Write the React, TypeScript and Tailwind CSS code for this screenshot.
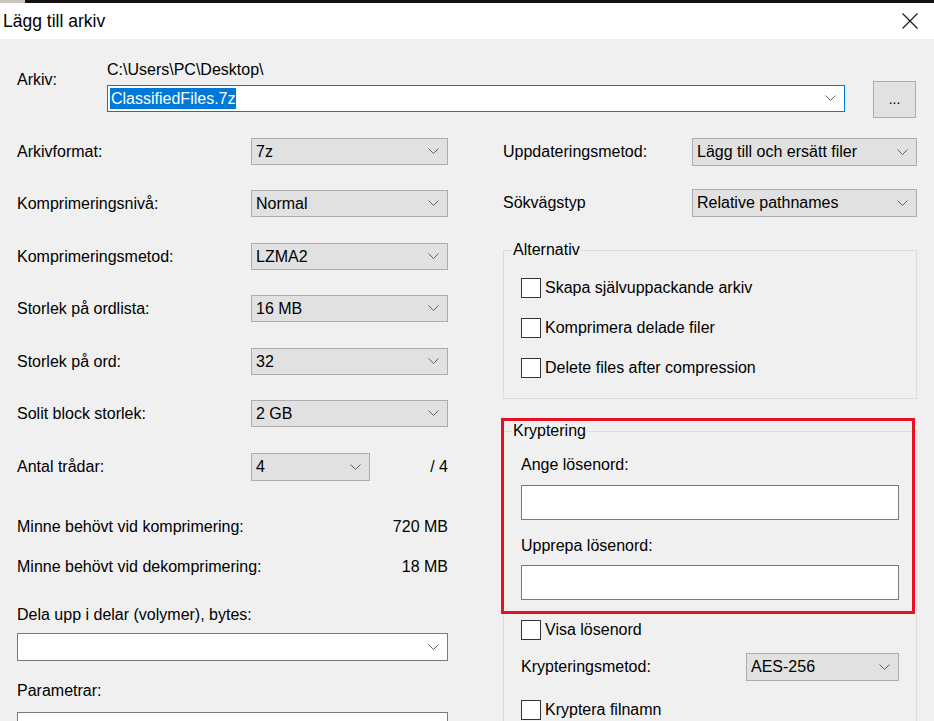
import React from "react";

const FONT = { fontFamily: '"Liberation Sans", Arial, sans-serif' };

function Chevron() {
  return (
    <svg width="11" height="7" viewBox="0 0 11 7" className="shrink-0">
      <polyline points="0.5,0.5 5.5,5.5 10.5,0.5" fill="none" stroke="#606060" strokeWidth="1" />
    </svg>
  );
}

function Select({ value, className = "" }: { value: string; className?: string }) {
  return (
    <div
      className={`flex items-center justify-between bg-[#e1e1e1] border border-[#adadad] pl-[4px] pr-[8px] text-[16px] leading-[18px] text-black ${className}`}
    >
      <span>{value}</span>
      <Chevron />
    </div>
  );
}

function Checkbox({ label, className = "" }: { label: string; className?: string }) {
  return (
    <div className={`flex items-center gap-[4px] h-[20px] ${className}`}>
      <div className="w-[20px] h-[20px] bg-white border border-[#333333]" />
      <span className="text-[16px] leading-[18px]">{label}</span>
    </div>
  );
}

function Row({ label, value, className }: { label: string; value: string; className: string }) {
  return (
    <div className={`flex items-center h-[27px] ${className}`}>
      <span className="w-[234px] text-[16px] leading-[18px]">{label}</span>
      <Select value={value} className="w-[197px] h-[27px]" />
    </div>
  );
}

export default function App() {
  return (
    <div className="w-[934px] h-[721px] overflow-hidden bg-[#f0f0f0] text-black" style={FONT}>
      {/* window top edge */}
      <div className="flex h-[3px]">
        <div className="w-[25px] bg-[#c9c5bd]" />
        <div className="flex-1 bg-[#111111]" />
      </div>

      {/* title bar */}
      <div className="flex items-center justify-between h-[36px] bg-white pl-[3px] pr-[16px]">
        <span className="text-[17.5px] leading-[20px]">Lägg till arkiv</span>
        <svg width="16" height="16" viewBox="0 0 16 16">
          <path d="M0.5 0.5 L15.5 15.5 M15.5 0.5 L0.5 15.5" stroke="#111" strokeWidth="1.1" fill="none" />
        </svg>
      </div>

      {/* archive path */}
      <div className="flex items-start pl-[17px] pt-[22px]">
        <span className="w-[90px] mt-[10px] text-[16px] leading-[18px]">Arkiv:</span>
        <div className="w-[738px] flex flex-col">
          <span className="text-[16px] leading-[18px] h-[18px]">C:\Users\PC\Desktop\</span>
          <div className="mt-[6px] h-[27px] flex items-center justify-between bg-white border border-[#0078d7] pl-[2px] pr-[8px]">
            <span className="bg-[#0078d7] text-white text-[16px] leading-[21px] px-[1px]">ClassifiedFiles.7z</span>
            <Chevron />
          </div>
        </div>
        <button className="ml-[28px] mt-[20px] w-[43px] h-[37px] bg-[#e1e1e1] border border-[#adadad] text-[14px] leading-[14px] pb-[2px]">
          ...
        </button>
      </div>

      <div className="flex mt-[20px]">
        {/* left column */}
        <div className="ml-[17px] w-[431px] flex flex-col">
          <Row label="Arkivformat:" value="7z" className="" />
          <Row label="Komprimeringsnivå:" value="Normal" className="mt-[25px]" />
          <Row label="Komprimeringsmetod:" value="LZMA2" className="mt-[26px]" />
          <Row label="Storlek på ordlista:" value="16 MB" className="mt-[25px]" />
          <Row label="Storlek på ord:" value="32" className="mt-[26px]" />
          <Row label="Solit block storlek:" value="2 GB" className="mt-[25px]" />
          <div className="flex items-center h-[28px] mt-[26px]">
            <span className="w-[234px] text-[16px] leading-[18px]">Antal trådar:</span>
            <Select value="4" className="w-[119px] h-[28px]" />
            <span className="flex-1 text-right text-[16px] leading-[18px]">/ 4</span>
          </div>
          <div className="flex justify-between mt-[37px] text-[16px] leading-[18px]">
            <span>Minne behövt vid komprimering:</span>
            <span>720 MB</span>
          </div>
          <div className="flex justify-between mt-[22px] text-[16px] leading-[18px]">
            <span>Minne behövt vid dekomprimering:</span>
            <span>18 MB</span>
          </div>
          <span className="mt-[30px] text-[16px] leading-[18px]">Dela upp i delar (volymer), bytes:</span>
          <div className="mt-[9px] h-[28px] flex items-center justify-end bg-white border border-[#7a7a7a] pr-[8px]">
            <Chevron />
          </div>
          <span className="mt-[21px] text-[16px] leading-[18px]">Parametrar:</span>
          <div className="mt-[12px] h-[30px] bg-white border border-[#7a7a7a]" />
        </div>

        {/* right column */}
        <div className="ml-[55px] w-[414px] flex flex-col">
          <div className="flex items-center h-[28px]">
            <span className="w-[189px] text-[16px] leading-[18px]">Uppdateringsmetod:</span>
            <Select value="Lägg till och ersätt filer" className="w-[225px] h-[28px]" />
          </div>
          <div className="flex items-center h-[28px] mt-[23px]">
            <span className="w-[189px] text-[16px] leading-[18px]">Sökvägstyp</span>
            <Select value="Relative pathnames" className="w-[225px] h-[28px]" />
          </div>

          <div className="relative mt-[33px] h-[149px] border border-[#dcdcdc] pl-[17px] pt-[27px] flex flex-col gap-[20px]">
            <span className="absolute -top-[10px] left-[8px] px-[1px] bg-[#f0f0f0] text-[16px] leading-[18px]">Alternativ</span>
            <Checkbox label="Skapa självuppackande arkiv" />
            <Checkbox label="Komprimera delade filer" />
            <Checkbox label="Delete files after compression" />
          </div>

          <div className="relative mt-[32px] h-[320px] border border-[#dcdcdc] px-[17px] pt-[24px] flex flex-col">
            <span className="absolute -top-[10px] left-[8px] px-[1px] bg-[#f0f0f0] text-[16px] leading-[18px]">Kryptering</span>
            <span className="text-[16px] leading-[18px]">Ange lösenord:</span>
            <div className="mt-[11px] h-[35px] bg-white border border-[#7a7a7a]" />
            <span className="mt-[17px] text-[16px] leading-[18px]">Upprepa lösenord:</span>
            <div className="mt-[10px] h-[35px] bg-white border border-[#7a7a7a]" />
            <Checkbox label="Visa lösenord" className="mt-[20px]" />
            <div className="flex items-center justify-between h-[28px] mt-[13px]">
              <span className="text-[16px] leading-[18px]">Krypteringsmetod:</span>
              <Select value="AES-256" className="w-[153px] h-[28px]" />
            </div>
            <Checkbox label="Kryptera filnamn" className="mt-[19px]" />

            {/* highlight annotation */}
            <div className="absolute -left-[3px] -top-[14px] w-[414px] h-[196px] border-[3px] border-[#e81123]" />
          </div>
        </div>
      </div>
    </div>
  );
}
